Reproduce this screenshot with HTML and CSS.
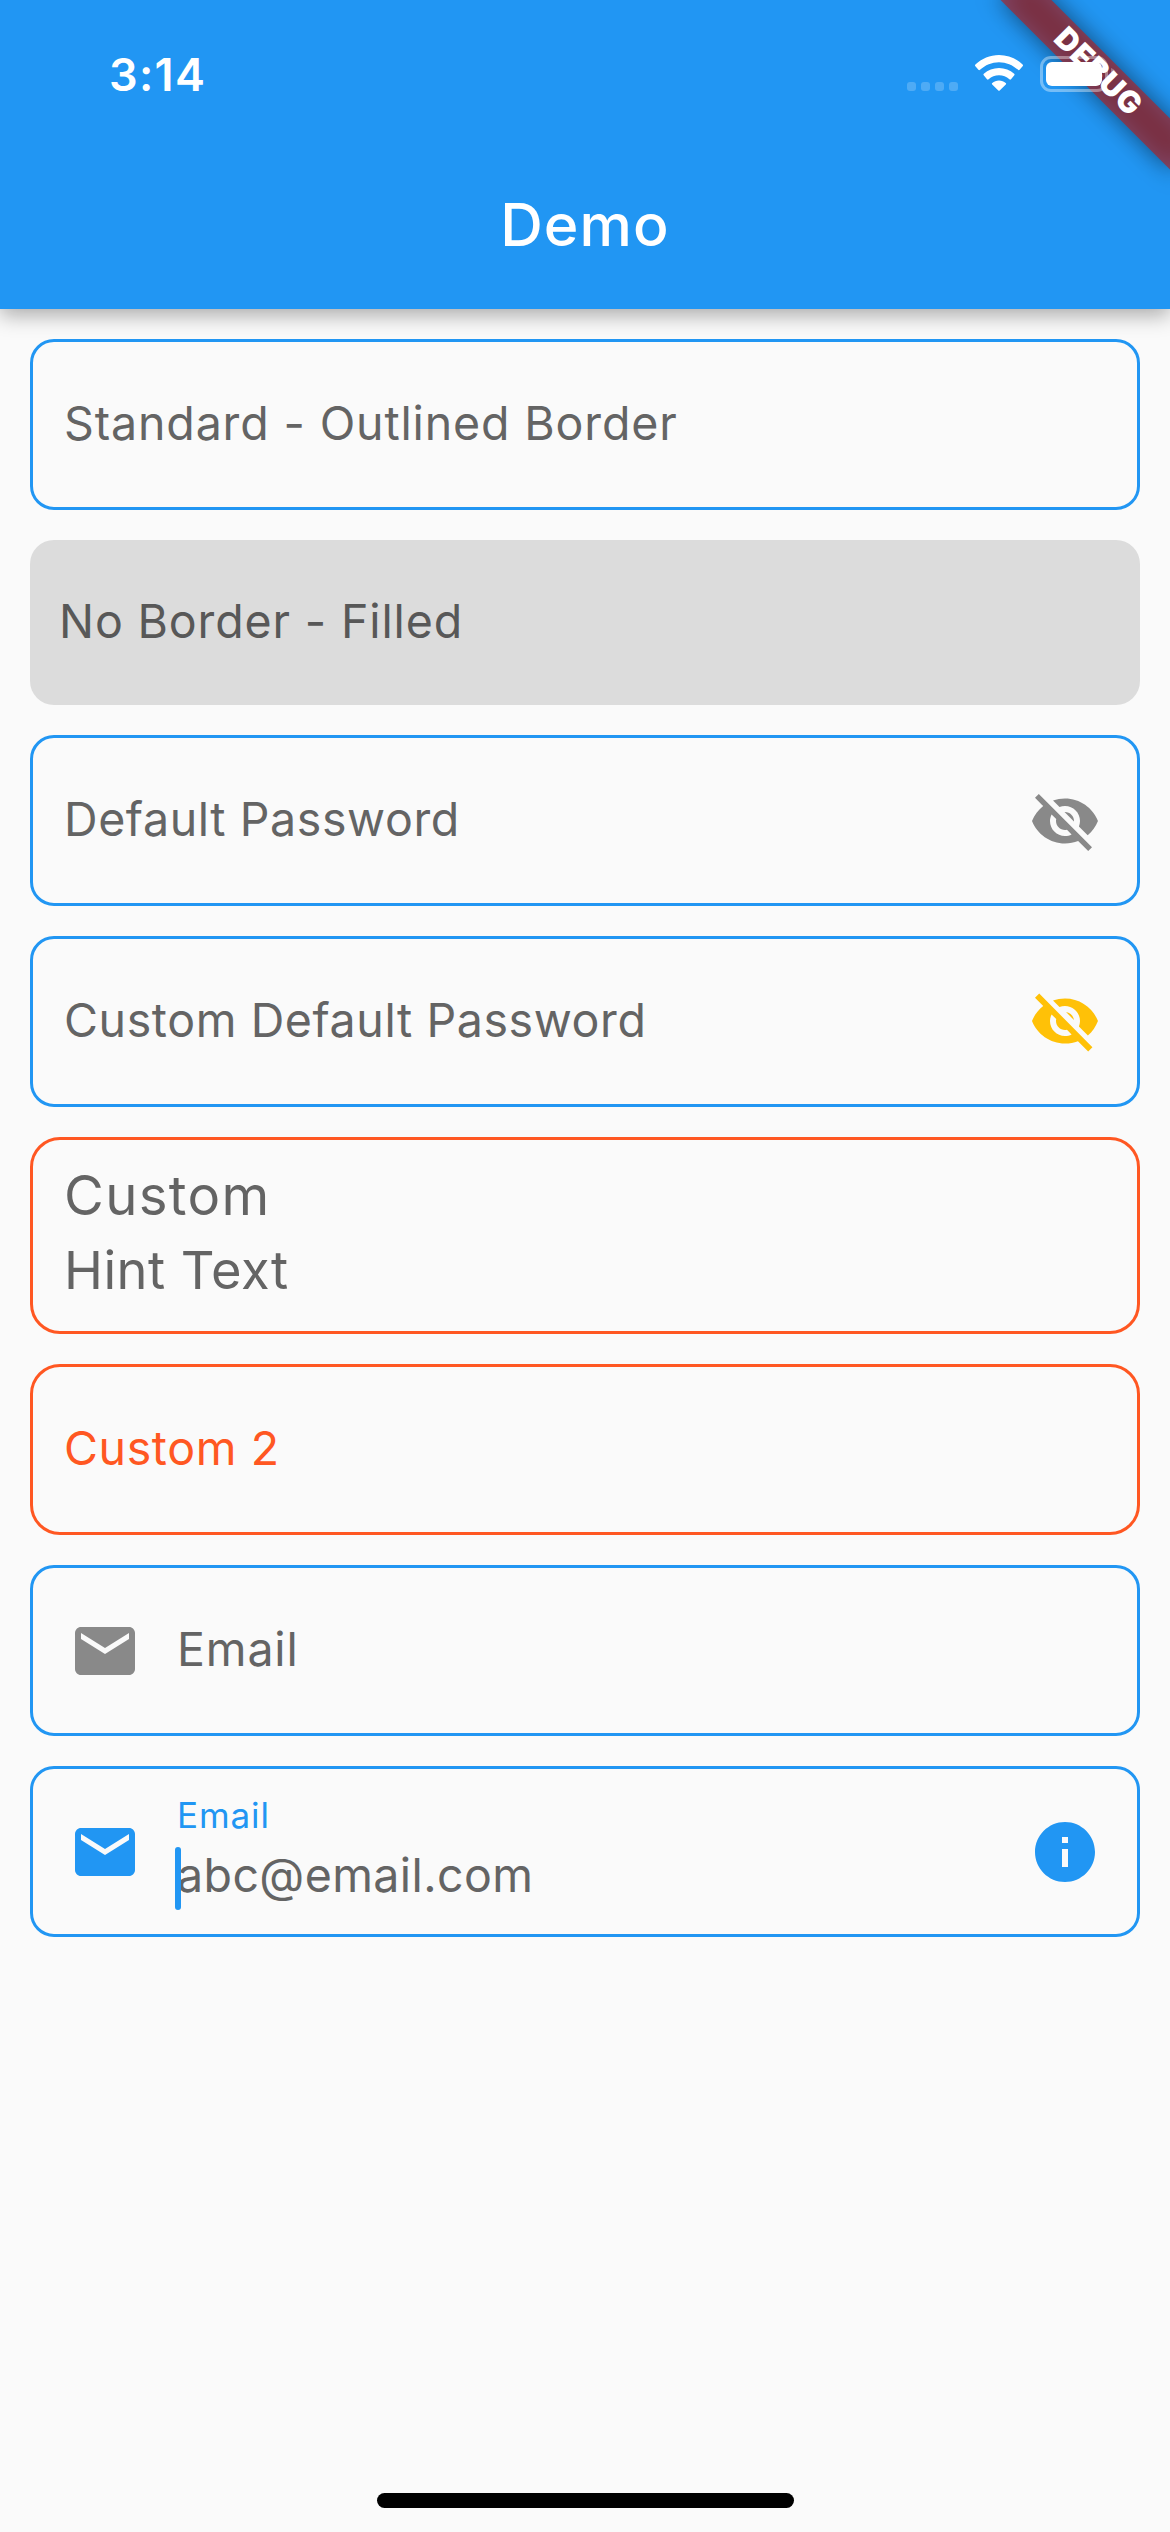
FILE: index.html
```html
<!DOCTYPE html>
<html lang="en">
<head>
<meta charset="utf-8">
<title>Demo</title>
<link rel="stylesheet" href="styles.css">
</head>
<body>
<div class="screen">
  <header class="app-bar">
    <div class="status-bar">
      <span class="clock">3:14</span>
      <div class="indicators">
        <svg class="signal" viewBox="0 0 51 9"><rect width="9" height="9" rx="3"/><rect x="14" width="9" height="9" rx="3"/><rect x="28" width="9" height="9" rx="3"/><rect x="42" width="9" height="9" rx="3"/></svg>
        <svg class="wifi" viewBox="0 0 48 36"><path d="M24 0C33 0 41.300 3.500 47.600 9.600Q48.400 10.400 47.600 11.200L44.600 14.700Q43.800 15.500 43 14.800C37.800 10 31.200 7.200 24 7.200S10.200 10 5 14.800Q4.200 15.500 3.400 14.700L.400 11.200Q-.400 10.400 .400 9.600C6.700 3.500 15 0 24 0Z"/><path d="M24 13C29.800 13 35 15.100 39.200 18.800Q40 19.500 39.300 20.300L36 24.200Q35.200 25 34.400 24.300C31.500 21.800 28 20.300 24 20.300S16.500 21.800 13.600 24.300Q12.800 25 12 24.200L8.700 20.300Q8 19.500 8.800 18.800C13 15.100 18.200 13 24 13Z"/><path d="M24 25.500C26.600 25.500 28.900 26.500 30.700 28Q31.500 28.700 30.800 29.400L24.700 35.500Q24 36.200 23.300 35.500L17.200 29.400Q16.500 28.700 17.300 28C19.100 26.500 21.400 25.500 24 25.500Z"/></svg>
        <svg class="battery" viewBox="0 0 77 36"><rect class="shell" x="1.500" y="1.500" width="65" height="33" rx="9.500"/><rect x="6" y="6" width="56" height="24" rx="6"/><path class="cap" d="M71 12c3 1 5 3 5 6s-2 5-5 6z"/></svg>
      </div>
    </div>
    <h1 class="title">Demo</h1>
  </header>
  <main class="form">
    <div class="field"><span class="label wide">Standard - Outlined Border</span></div>
    <div class="field filled"><span class="label wide">No Border - Filled</span></div>
    <div class="field"><span class="label">Default Password</span>
      <svg class="icon muted" viewBox="0 0 24 24"><path d="M12 7c2.760 0 5 2.240 5 5 0 .650-.130 1.260-.360 1.830l2.920 2.920c1.510-1.260 2.700-2.890 3.430-4.750-1.730-4.390-6-7.500-11-7.500-1.400 0-2.740.250-3.980.700l2.160 2.160C10.740 7.130 11.350 7 12 7zM2 4.270l2.280 2.280.460.460C3.080 8.300 1.780 10.020 1 12c1.730 4.390 6 7.500 11 7.500 1.550 0 3.030-.300 4.380-.840l.420.420L19.730 22 21 20.730 3.270 3 2 4.270zM7.530 9.800l1.550 1.550c-.050.210-.080.430-.080.650 0 1.660 1.340 3 3 3 .220 0 .440-.030.650-.080l1.550 1.550c-.670.330-1.410.530-2.200.530-2.760 0-5-2.240-5-5 0-.790.200-1.530.530-2.200zm4.310-.780l3.150 3.150.020-.160c0-1.660-1.340-3-3-3l-.170.010z"/></svg></div>
    <div class="field"><span class="label">Custom Default Password</span>
      <svg class="icon amber" viewBox="0 0 24 24"><path d="M12 7c2.760 0 5 2.240 5 5 0 .650-.130 1.260-.360 1.830l2.990 2.990c1.510-1.260 2.630-2.960 3.360-4.820-1.730-4.390-6-7.500-11-7.500-1.400 0-2.740.250-3.980.700l2.160 2.160C10.740 7.130 11.350 7 12 7zM2 4.270l2.740 2.740C3.080 8.300 1.780 10.020 1 12c1.730 4.390 6 7.500 11 7.500 1.550 0 3.030-.300 4.320-.780L19.730 22.140l1.410-1.410L3.410 2.860 2 4.270zM7.530 9.800l1.550 1.550c-.050.210-.080.430-.080.650 0 1.660 1.340 3 3 3 .220 0 .440-.030.650-.080l1.550 1.550c-.670.330-1.410.530-2.200.530-2.760 0-5-2.240-5-5 0-.790.200-1.530.530-2.200zm4.810-.780l2.650 2.650c-.180-1.400-1.270-2.470-2.650-2.650z"/></svg></div>
    <div class="field orange tall"><span class="label large"><span class="lead">Custom</span><br>Hint Text</span></div>
    <div class="field orange"><span class="label">Custom 2</span></div>
    <div class="field with-prefix">
      <svg class="icon muted" viewBox="0 0 24 24"><path d="M20 4H4c-1.100 0-1.990.900-1.990 2L2 18c0 1.100.900 2 2 2h16c1.100 0 2-.900 2-2V6c0-1.100-.900-2-2-2zm0 4l-8 5-8-5V6l8 5 8-5v2z"/></svg>
      <span class="label wide">Email</span></div>
    <div class="field with-prefix">
      <svg class="icon blue" viewBox="0 0 24 24"><path d="M20 4H4c-1.100 0-1.990.900-1.990 2L2 18c0 1.100.900 2 2 2h16c1.100 0 2-.900 2-2V6c0-1.100-.900-2-2-2zm0 4l-8 5-8-5V6l8 5 8-5v2z"/></svg>
      <div class="stack"><span class="floating">Email</span><span class="hint">abc@email.com<i class="caret"></i></span></div>
      <svg class="icon blue" viewBox="0 0 24 24"><path d="M12 2C6.480 2 2 6.480 2 12s4.480 10 10 10 10-4.480 10-10S17.520 2 12 2zm1 15h-2v-6h2v6zm0-8h-2V7h2v2z"/></svg></div>
  </main>
  <div class="home-indicator"></div>
  <div class="debug-corner"><div class="banner">DEBUG</div></div>
</div>
</body>
</html>
```
FILE: styles.css
```css
* { box-sizing: border-box; }
body { margin: 0; background: #fafafa; font-family: Inter, "Liberation Sans", sans-serif; }
.screen { position: relative; width: 1170px; height: 2532px; display: flex; flex-direction: column; overflow: hidden; }

.app-bar { height: 309px; background: #2196f3; color: #fff; box-shadow: 0 6px 20px rgba(0, 0, 0, .33); }
.status-bar { height: 141px; display: flex; justify-content: space-between; padding: 0 53px 0 109px; }
.clock { font-size: 45px; font-weight: 600; line-height: 54px; padding-top: 48px; letter-spacing: 1.3px; }
.indicators { position: relative; z-index: 3; display: flex; align-items: flex-start; fill: #fff; }
.signal { width: 51px; height: 9px; margin: 82px 17px 0 0; opacity: .2; }
.wifi { width: 48px; height: 36px; margin: 55px 17px 0 0; }
.battery { width: 77px; height: 36px; margin-top: 56px; }
.shell { fill: none; stroke: #fff; stroke-width: 3; opacity: .38; }
.cap { opacity: .3; }
.title { margin: 0; font-size: 59px; font-weight: 500; line-height: 168px; text-align: center; letter-spacing: 1.1px; }

.form { flex: 1; display: flex; flex-direction: column; gap: 30px; padding: 30px; }
.field { height: 171px; display: flex; align-items: center; border: 3px solid #2196f3; border-radius: 24px; padding: 0 36px 0 31px; color: #646464; }
.field.filled { height: 165px; border: 0; background: #dcdcdc; color: #585858; padding-left: 29px; }
.field.orange { border-color: #ff5722; border-radius: 30px; color: #ff5722; }
.field.tall { height: 197px; color: #646464; }
.field.with-prefix { padding-left: 36px; gap: 36px; }
.label { flex: 1; font-size: 46.5px; line-height: 60px; padding-bottom: 3px; letter-spacing: .6px; white-space: nowrap; }
.label.wide { letter-spacing: .86px; }
.label.large { font-size: 52.4px; line-height: 74.4px; letter-spacing: .48px; padding-bottom: 5px; }
.lead { font-size: 54.5px; letter-spacing: 1.35px; line-height: 1; }
.icon { width: 72px; height: 72px; flex: none; }
.muted { fill: #898989; }
.amber { fill: #ffc107; margin-bottom: 2px; }
.blue { fill: #2196f3; }
.stack { flex: 1; align-self: flex-start; display: flex; flex-direction: column; gap: 6px; padding-top: 24px; }
.floating { font-size: 35px; line-height: 44px; color: #2196f3; letter-spacing: .9px; }
.hint { position: relative; font-size: 46.5px; line-height: 64px; letter-spacing: .4px; }
.caret { position: absolute; left: -2px; top: 4px; width: 6px; height: 63px; border-radius: 3px; background: #2196f3; }

.home-indicator { width: 417px; height: 15px; border-radius: 8px; background: #000; margin: 0 auto 24px; }

.debug-corner { position: absolute; top: 0; right: 0; width: 300px; height: 300px; overflow: hidden; z-index: 2; }
.banner { position: absolute; left: 108px; top: 54px; width: 240px; height: 36px; transform: rotate(45deg); color: #fff; font-size: 30.6px; font-weight: 900; line-height: 33px; letter-spacing: .6px; text-align: center; }
.banner::before, .banner::after { content: ""; position: absolute; inset: 0; z-index: -1; }
.banner::before { background: rgba(0, 0, 0, .5); filter: blur(12px); }
.banner::after { background: rgba(183, 28, 28, .627); }
```
